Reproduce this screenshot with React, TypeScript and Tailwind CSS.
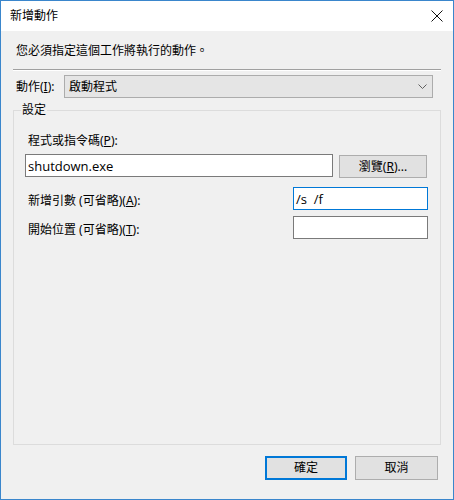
import React from "react";

const font = { fontFamily: '"Noto Sans", "Noto Sans CJK TC", sans-serif' };
const inputFont = { fontFamily: '"Open Sans", "Noto Sans", sans-serif' };

export default function App() {
  return (
    <div
      className="w-[454px] h-[500px] border border-[#3a86cc] bg-[#f0f0f0] flex flex-col text-[12px] leading-[16px] text-black overflow-hidden"
      style={font}
    >
      {/* title bar */}
      <div className="h-[30px] shrink-0 bg-white flex items-center justify-between pl-[9px] pr-[10px]">
        <span className="text-[12px]">新增動作</span>
        <svg width="12" height="12" viewBox="0 0 12 12">
          <path d="M0.5 0.5 L11.5 11.5 M11.5 0.5 L0.5 11.5" stroke="#111" strokeWidth="1" fill="none" />
        </svg>
      </div>

      {/* description */}
      <div className="mt-[12px] pl-[15px]">您必須指定這個工作將執行的動作。</div>

      {/* separator */}
      <div className="mt-[10px] ml-[12px] w-[428px] h-[2px] border-t border-t-[#a0a0a0] border-b border-b-white" />

      {/* action row */}
      <div className="mt-[4px] pl-[15px] flex items-center h-[23px]">
        <span className="w-[48px]">
          動作(<u>I</u>):
        </span>
        <div className="w-[369px] h-[23px] bg-[#e5e5e5] border border-[#acacac] flex items-center justify-between pl-[4px] pr-[5px]">
          <span>啟動程式</span>
          <svg width="9" height="5" viewBox="0 0 9 5">
            <path d="M0.5 0.5 L4.5 4.5 L8.5 0.5" stroke="#606060" strokeWidth="1" fill="none" />
          </svg>
        </div>
      </div>

      {/* group box */}
      <div className="relative mt-[12px] ml-[12px] w-[428px] h-[335px] border border-[#dcdcdc] flex flex-col">
        <span className="absolute left-[7px] top-[-9px] px-[1px] bg-[#f0f0f0]">設定</span>

        <div className="mt-[22px] pl-[14px]">
          程式或指令碼(<u>P</u>):
        </div>

        <div className="mt-[4px] ml-[11px] flex items-center">
          <div
            className="w-[308px] h-[23px] bg-white border border-[#7a7a7a] flex items-center pl-[2px] text-[13px]"
            style={inputFont}
          >
            shutdown.exe
          </div>
          <div className="ml-[6px] mt-[2px] w-[88px] h-[23px] bg-[#e1e1e1] border border-[#adadad] flex items-center justify-center">
            瀏覽(<u>R</u>)...
          </div>
        </div>

        <div className="mt-[9px] flex items-center justify-between pl-[14px] pr-[12px]">
          <span className="mt-[4px]">
            新增引數 (可省略)(<u>A</u>):
          </span>
          <div
            className="w-[135px] h-[23px] bg-white border border-[#0078d7] flex items-center pl-[2px] text-[13px]"
            style={inputFont}
          >
            /s&nbsp;&nbsp;/f
          </div>
        </div>

        <div className="mt-[6px] flex items-center justify-between pl-[14px] pr-[12px]">
          <span className="mt-[4px]">
            開始位置 (可省略)(<u>T</u>):
          </span>
          <div className="w-[135px] h-[23px] bg-white border border-[#7a7a7a]" />
        </div>
      </div>

      {/* buttons */}
      <div className="mt-[11px] flex justify-end gap-[8px] pr-[15px]">
        <div className="w-[82px] h-[24px] bg-[#e1e1e1] border-2 border-[#0078d7] flex items-center justify-center">
          確定
        </div>
        <div className="w-[83px] h-[24px] bg-[#e1e1e1] border border-[#adadad] flex items-center justify-center">
          取消
        </div>
      </div>
    </div>
  );
}
